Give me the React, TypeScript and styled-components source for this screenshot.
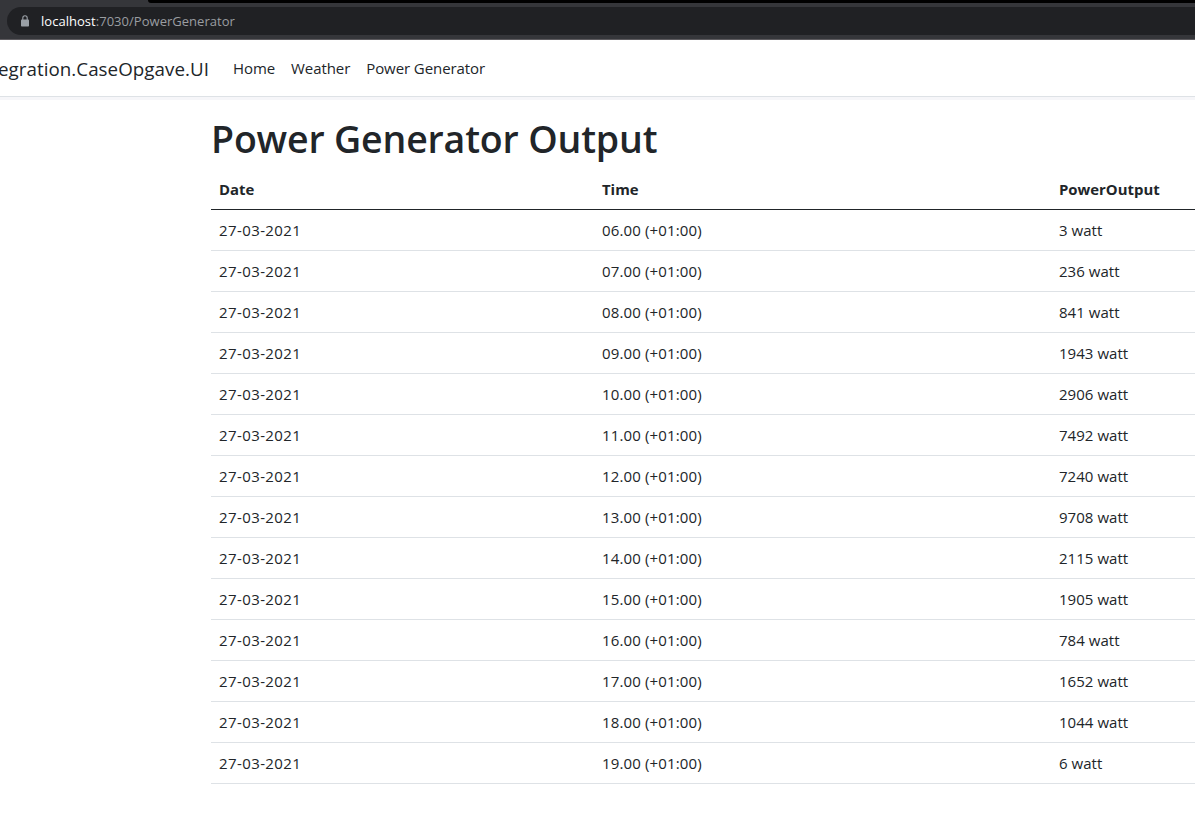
import React from "react";
import styled, { createGlobalStyle } from "styled-components";

const GlobalStyle = createGlobalStyle`
  *, *::before, *::after { box-sizing: border-box; }
  html, body { margin: 0; height: 100%; overflow: hidden; background: #fff; }
  body {
    font-family: "Segoe UI", "Open Sans", "Noto Sans", sans-serif;
    font-size: 15px;
    line-height: 24px;
    color: #212529;
  }
`;

const Page = styled.div`
  width: 100%;
  height: 815px;
  overflow: hidden;
`;

const BrowserBar = styled.header`
  display: flex;
  flex-direction: column;
  height: 40px;
  background: #35363a;
  border-bottom: 1px solid #5d5b5f;
`;

const TabStrip = styled.div`
  height: 3px;
  margin-left: 148px;
  background: #000;
  border-bottom-left-radius: 3px;
`;

const AddressBar = styled.div`
  display: flex;
  align-items: center;
  height: 28px;
  margin: 4px 0 0 7px;
  padding-left: 14px;
  border-radius: 14px 0 0 14px;
  background: #202124;
`;

const LockIcon = styled.svg`
  width: 8px;
  height: 12px;
  margin: -1px 12px 0 0;
`;

const Url = styled.span<{ $strong?: boolean }>`
  font-size: 13px;
  line-height: 28px;
  letter-spacing: 0.03px;
  color: ${(p) => (p.$strong ? "#fff" : "#9a9da1")};
`;

const NavBar = styled.nav`
  display: flex;
  align-items: center;
  height: 57px;
  border-bottom: 1px solid #dee2e6;
  box-shadow: 0 3px 0 #f6f6f9;
  white-space: nowrap;
`;

const Brand = styled.a`
  width: 209px;
  display: flex;
  justify-content: flex-end;
  font-size: 18.75px;
  line-height: 30px;
  letter-spacing: 0.05px;
  padding-top: 1px;
  margin-right: 16px;
`;

const NavLink = styled.a`
  padding: 0 8px;
  letter-spacing: -0.08px;
`;

const Main = styled.main`
  width: 1296px;
  margin: 16px 0 0 211px;
`;

const Title = styled.h1`
  margin: 0;
  padding-top: 2px;
  height: 56px;
  font-size: 37.5px;
  font-weight: 600;
  line-height: 48px;
  letter-spacing: -0.17px;
  white-space: nowrap;
`;

const Table = styled.table`
  width: 1296px;
  table-layout: fixed;
  border-collapse: separate;
  border-spacing: 0;
`;

const HeadCell = styled.th<{ $width: number }>`
  width: ${(p) => p.$width}px;
  padding: 8px;
  border-bottom: 1px solid #212529;
  font-size: 14.9px;
  font-weight: 700;
  text-align: left;
`;

const Cell = styled.td<{ $spacing?: string }>`
  padding: 8px;
  border-bottom: 1px solid #dee2e6;
  letter-spacing: ${(p) => p.$spacing ?? "0.04px"};
`;

const columns = [
  { label: "Date", width: 383 },
  { label: "Time", width: 457 },
  { label: "PowerOutput", width: 456 },
];

const output = [3, 236, 841, 1943, 2906, 7492, 7240, 9708, 2115, 1905, 784, 1652, 1044, 6];

const readings = output.map((watt, i) => ({
  date: "27-03-2021",
  time: `${String(i + 6).padStart(2, "0")}.00 (+01:00)`,
  power: `${watt} watt`,
}));

export default function App() {
  return (
    <Page>
      <GlobalStyle />
      <BrowserBar>
        <TabStrip />
        <AddressBar>
          <LockIcon viewBox="0 0 8 12">
            <path d="M1.8 5V3a2.2 2.2 0 0 1 4.4 0v2" fill="none" stroke="#9aa0a6" strokeWidth="1.1" />
            <rect x="0" y="4.5" width="8" height="7" rx="0.8" fill="#9aa0a6" />
          </LockIcon>
          <Url $strong>localhost</Url>
          <Url>:7030/PowerGenerator</Url>
        </AddressBar>
      </BrowserBar>
      <NavBar>
        <Brand>Integration.CaseOpgave.UI</Brand>
        <NavLink>Home</NavLink>
        <NavLink>Weather</NavLink>
        <NavLink>Power Generator</NavLink>
      </NavBar>
      <Main>
        <Title>Power Generator Output</Title>
        <Table>
          <thead>
            <tr>
              {columns.map((c) => (
                <HeadCell key={c.label} $width={c.width}>{c.label}</HeadCell>
              ))}
            </tr>
          </thead>
          <tbody>
            {readings.map((r) => (
              <tr key={r.time}>
                <Cell $spacing="0.4px">{r.date}</Cell>
                <Cell $spacing="0.14px">{r.time}</Cell>
                <Cell>{r.power}</Cell>
              </tr>
            ))}
          </tbody>
        </Table>
      </Main>
    </Page>
  );
}
